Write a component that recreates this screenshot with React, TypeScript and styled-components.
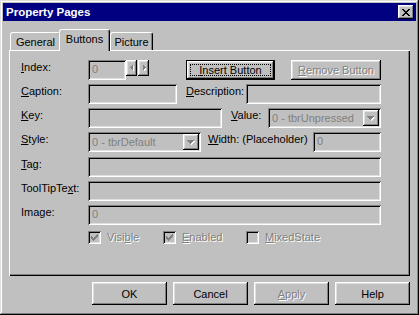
import React from 'react';
import styled, { createGlobalStyle, css } from 'styled-components';

const GlobalStyle = createGlobalStyle`
  html, body {
    margin: 0;
    padding: 0;
    background: #c0c0c0;
  }
  body {
    font-family: "Liberation Sans", Arial, sans-serif;
    font-size: 11px;
    color: #000;
  }
  * {
    box-sizing: border-box;
  }
`;

const raised = css`
  background: #c0c0c0;
  box-shadow: inset -1px -1px #000, inset 1px 1px #fff, inset -2px -2px #808080, inset 2px 2px #dfdfdf;
`;

const sunken = css`
  background: #c0c0c0;
  box-shadow: inset 1px 1px #808080, inset -1px -1px #fff, inset 2px 2px #000, inset -2px -2px #dfdfdf;
`;

const disabledText = css`
  color: #808080;
  text-shadow: 1px 1px 0 #fff;
`;

const Window = styled.div`
  width: 419px;
  height: 315px;
  padding: 3px;
  display: flex;
  flex-direction: column;
  background: #c0c0c0;
  box-shadow: inset -1px -1px #000, inset 1px 1px #dfdfdf, inset -2px -2px #808080, inset 2px 2px #fff;
`;

const TitleBar = styled.div`
  height: 18px;
  display: flex;
  align-items: center;
  justify-content: space-between;
  padding: 0 2px 0 3px;
  background: #000080;
  color: #fff;
  font-weight: bold;
  font-size: 11.5px;
`;

const CloseButton = styled.div`
  width: 16px;
  height: 14px;
  display: flex;
  align-items: center;
  justify-content: center;
  ${raised}
`;

const Content = styled.div`
  flex: 1;
  display: flex;
  flex-direction: column;
  padding: 8px 6px 0 6px;
`;

const TabStrip = styled.div`
  height: 21px;
  display: flex;
  align-items: flex-end;
  padding-left: 1px;
`;

const Tab = styled.div<{ $w: number; $active?: boolean }>`
  width: ${({ $w }) => $w}px;
  height: ${({ $active }) => ($active ? 22 : 18)}px;
  margin-bottom: ${({ $active }) => ($active ? -1 : 0)}px;
  ${({ $active }) => $active && 'margin-left: -2px; position: relative; z-index: 1; padding-bottom: 3px;'}
  display: flex;
  align-items: center;
  justify-content: center;
  background: #c0c0c0;
  border-top: 1px solid #fff;
  border-left: 1px solid #fff;
  border-right: 1px solid #000;
  border-radius: 3px 3px 0 0;
  box-shadow: inset -1px 0 #808080;
`;

const Panel = styled.div`
  height: 226px;
  padding: 10px 0 0 12px;
  display: flex;
  flex-direction: column;
  gap: 4px;
  box-shadow: inset 1px 1px #fff, inset -1px -1px #000, inset -2px -2px #808080;
`;

const Row = styled.div<{ $top?: number }>`
  display: flex;
  align-items: flex-start;
  height: 20px;
  margin-top: ${({ $top }) => $top || 0}px;
`;

const Label = styled.div<{ $w: number; $left?: number }>`
  width: ${({ $w }) => $w}px;
  margin-left: ${({ $left }) => $left || 0}px;
  padding-top: 1px;
  line-height: 13px;
  white-space: nowrap;
`;

const Field = styled.div<{ $w: number }>`
  width: ${({ $w }) => $w}px;
  height: 20px;
  padding: 3px 4px 0;
  line-height: 13px;
  color: #808080;
  white-space: nowrap;
  overflow: hidden;
  ${sunken}
`;

const Combo = styled.div<{ $w: number }>`
  width: ${({ $w }) => $w}px;
  height: 20px;
  padding: 2px;
  display: flex;
  align-items: center;
  justify-content: space-between;
  color: #808080;
  white-space: nowrap;
  ${sunken}
`;

const ComboText = styled.span`
  padding-left: 2px;
`;

const DropButton = styled.div`
  width: 16px;
  height: 16px;
  display: flex;
  align-items: center;
  justify-content: center;
  ${raised}
`;

const Spin = styled.div`
  display: flex;
  gap: 1px;
`;

const SpinButton = styled.div`
  width: 11px;
  height: 16px;
  display: flex;
  align-items: center;
  justify-content: center;
  ${raised}
`;

const PushButton = styled.div<{ $w: number; $h?: number; $left?: number; $focused?: boolean; $disabled?: boolean }>`
  width: ${({ $w }) => $w}px;
  height: ${({ $h }) => $h || 23}px;
  margin-left: ${({ $left }) => $left || 0}px;
  display: flex;
  align-items: center;
  justify-content: center;
  padding: 3px;
  white-space: nowrap;
  ${raised}
  ${({ $focused }) => $focused && 'border: 1px solid #000;'}
  ${({ $disabled }) => $disabled && disabledText}
`;

const FocusRect = styled.div`
  flex: 1;
  align-self: stretch;
  display: flex;
  align-items: center;
  justify-content: center;
  border: 1px dotted #000;
  line-height: 11px;
`;

const CheckRow = styled.div`
  display: flex;
  align-items: center;
  height: 13px;
  margin-top: 2px;
  padding-left: 67px;
`;

const CheckItem = styled.div<{ $w?: number }>`
  width: ${({ $w }) => ($w ? `${$w}px` : 'auto')};
  display: flex;
  align-items: center;
`;

const CheckBox = styled.div`
  width: 13px;
  height: 13px;
  display: flex;
  align-items: center;
  justify-content: center;
  ${sunken}
`;

const CheckLabel = styled.span`
  margin-left: 6px;
  line-height: 13px;
  ${disabledText}
`;

const Footer = styled.div`
  margin-top: 6px;
  display: flex;
  justify-content: flex-end;
  gap: 6px;
`;

const CloseIcon = () => (
  <svg width="8" height="7" viewBox="0 0 8 7" shapeRendering="crispEdges">
    <path
      fill="#000"
      d="M0 0h2v1H0zM6 0h2v1H6zM1 1h2v1H1zM5 1h2v1H5zM2 2h4v1H2zM3 3h2v1H3zM2 4h4v1H2zM1 5h2v1H1zM5 5h2v1H5zM0 6h2v1H0zM6 6h2v1H6z"
    />
  </svg>
);

const DownArrow = () => (
  <svg width="8" height="5" viewBox="0 0 8 5" shapeRendering="crispEdges">
    <path fill="#fff" d="M1 1h7v1H1zM2 2h5v1H2zM3 3h3v1H3zM4 4h1v1H4z" />
    <path fill="#808080" d="M0 0h7v1H0zM1 1h5v1H1zM2 2h3v1H2zM3 3h1v1H3z" />
  </svg>
);

const SideArrow = ({ dir }: { dir: 'left' | 'right' }) => (
  <svg width="4" height="6" viewBox="0 0 4 6" shapeRendering="crispEdges">
    {dir === 'left' ? (
      <>
        <path fill="#fff" d="M3 1h1v5H3zM2 2h1v3H2z" />
        <path fill="#808080" d="M2 0h1v5H2zM1 1h1v3H1zM0 2h1v1H0z" />
      </>
    ) : (
      <>
        <path fill="#fff" d="M2 1h1v5H2zM3 2h1v3H3z" />
        <path fill="#808080" d="M1 0h1v5H1zM2 1h1v3H2zM3 2h1v1H3z" />
      </>
    )}
  </svg>
);

const CheckMark = () => (
  <svg width="7" height="7" viewBox="0 0 7 7" shapeRendering="crispEdges">
    <path fill="#808080" d="M6 0h1v3H6zM5 1h1v3H5zM4 2h1v3H4zM3 3h1v3H3zM2 4h1v3H2zM1 3h1v3H1zM0 2h1v3H0z" />
  </svg>
);

export default function App() {
  return (
    <>
      <GlobalStyle />
      <Window>
        <TitleBar>
          <span>Property Pages</span>
          <CloseButton>
            <CloseIcon />
          </CloseButton>
        </TitleBar>
        <Content>
          <TabStrip>
            <Tab $w={51}>General</Tab>
            <Tab $w={51} $active>Buttons</Tab>
            <Tab $w={43}>Picture</Tab>
          </TabStrip>
          <Panel>
            <Row>
              <Label $w={67}><u>I</u>ndex:</Label>
              <Field $w={38}>0</Field>
              <Spin>
                <SpinButton><SideArrow dir="left" /></SpinButton>
                <SpinButton><SideArrow dir="right" /></SpinButton>
              </Spin>
              <PushButton $w={89} $h={20} $left={37} $focused>
                <FocusRect><u>I</u>nsert Button</FocusRect>
              </PushButton>
              <PushButton $w={90} $h={20} $left={16} $disabled>
                <u>R</u>emove Button
              </PushButton>
            </Row>
            <Row>
              <Label $w={67}><u>C</u>aption:</Label>
              <Field $w={89} />
              <Label $w={60} $left={9}><u>D</u>escription:</Label>
              <Field $w={135} />
            </Row>
            <Row>
              <Label $w={67}><u>K</u>ey:</Label>
              <Field $w={134} />
              <Label $w={37} $left={9}><u>V</u>alue:</Label>
              <Combo $w={113}>
                <ComboText>0 - tbrUnpressed</ComboText>
                <DropButton><DownArrow /></DropButton>
              </Combo>
            </Row>
            <Row>
              <Label $w={67}><u>S</u>tyle:</Label>
              <Combo $w={113}>
                <ComboText>0 - tbrDefault</ComboText>
                <DropButton><DownArrow /></DropButton>
              </Combo>
              <Label $w={105} $left={7}><u>W</u>idth: (Placeholder)</Label>
              <Field $w={68}>0</Field>
            </Row>
            <Row $top={1}>
              <Label $w={67}><u>T</u>ag:</Label>
              <Field $w={293} />
            </Row>
            <Row>
              <Label $w={67}>ToolTipTe<u>x</u>t:</Label>
              <Field $w={293} />
            </Row>
            <Row>
              <Label $w={67}>Image:</Label>
              <Field $w={293}>0</Field>
            </Row>
            <CheckRow>
              <CheckItem $w={75}>
                <CheckBox><CheckMark /></CheckBox>
                <CheckLabel>Visi<u>b</u>le</CheckLabel>
              </CheckItem>
              <CheckItem $w={83}>
                <CheckBox><CheckMark /></CheckBox>
                <CheckLabel><u>E</u>nabled</CheckLabel>
              </CheckItem>
              <CheckItem>
                <CheckBox />
                <CheckLabel><u>M</u>ixedState</CheckLabel>
              </CheckItem>
            </CheckRow>
          </Panel>
          <Footer>
            <PushButton $w={75}>OK</PushButton>
            <PushButton $w={75}>Cancel</PushButton>
            <PushButton $w={75} $disabled><u>A</u>pply</PushButton>
            <PushButton $w={75}>Help</PushButton>
          </Footer>
        </Content>
      </Window>
    </>
  );
}
